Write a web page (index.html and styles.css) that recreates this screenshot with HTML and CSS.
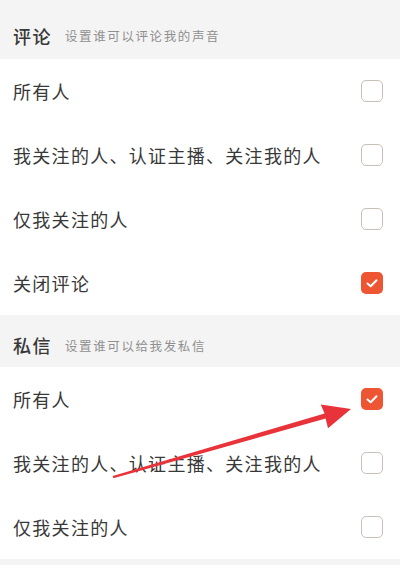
FILE: index.html
```html
<!DOCTYPE html>
<html lang="zh-CN">
<head>
<meta charset="utf-8">
<title>隐私设置</title>
<link rel="stylesheet" href="styles.css">
</head>
<body>
<div class="page">
  <div class="section-head head-first">
    <span class="head-title">评论</span>
    <span class="head-sub">设置谁可以评论我的声音</span>
  </div>
  <div class="row"><span class="label">所有人</span><span class="box"></span></div>
  <div class="row"><span class="label">我关注的人、认证主播、关注我的人</span><span class="box"></span></div>
  <div class="row"><span class="label">仅我关注的人</span><span class="box"></span></div>
  <div class="row"><span class="label">关闭评论</span><span class="box checked"><svg viewBox="0 0 22 22" class="tick"><path d="M6.5 11.5 L9.7 14.3 L15.5 8.3" fill="none" stroke="#fff" stroke-width="2" stroke-linecap="round" stroke-linejoin="round"/></svg></span></div>

  <div class="section-head head-second">
    <span class="head-title">私信</span>
    <span class="head-sub">设置谁可以给我发私信</span>
  </div>
  <div class="row"><span class="label">所有人</span><span class="box checked"><svg viewBox="0 0 22 22" class="tick"><path d="M6.5 11.5 L9.7 14.3 L15.5 8.3" fill="none" stroke="#fff" stroke-width="2" stroke-linecap="round" stroke-linejoin="round"/></svg></span></div>
  <div class="row"><span class="label">我关注的人、认证主播、关注我的人</span><span class="box"></span></div>
  <div class="row"><span class="label">仅我关注的人</span><span class="box"></span></div>
  <div class="bottom-gap"></div>

  <svg class="arrow" viewBox="0 0 400 565" width="400" height="565">
    <polygon fill="#e9333b" points="112.7,476 324.6,413.4 320.7,404.5 351,409 328,428.2 325.6,418.6 113.4,478.2"/>
  </svg>
</div>
</body>
</html>
```
FILE: styles.css
```css
html, body {
  margin: 0;
  padding: 0;
  background: #ffffff;
}
.page {
  position: relative;
  width: 400px;
  height: 565px;
  overflow: hidden;
  font-family: "Noto Sans CJK SC", "Noto Sans", sans-serif;
  background: #f4f4f4;
}
.section-head {
  display: flex;
  align-items: center;
  padding-left: 13px;
  box-sizing: border-box;
  background: #f4f4f4;
}
.head-first {
  height: 59px;
  padding-top: 12px;
}
.head-second {
  height: 52px;
  padding-top: 8px;
}
.head-title {
  font-size: 18px;
  font-weight: 500;
  letter-spacing: 1.5px;
  color: #383838;
}
.head-sub {
  margin-left: 13px;
  font-size: 12.5px;
  letter-spacing: 1.6px;
  color: #8f8f8f;
}
.row {
  display: flex;
  align-items: center;
  justify-content: space-between;
  height: 64px;
  padding: 0 17px 0 13px;
  background: #ffffff;
}
.label {
  font-size: 18px;
  letter-spacing: 1.3px;
  color: #383838;
}
.box {
  width: 22px;
  height: 22px;
  box-sizing: border-box;
  border: 1.8px solid #c9bfb9;
  border-radius: 5px;
  display: flex;
}
.box.checked {
  border: none;
  background: #ee5533;
}
.tick {
  width: 22px;
  height: 22px;
}
.bottom-gap {
  height: 6px;
  background: #f4f4f4;
}
.arrow {
  position: absolute;
  left: 0;
  top: 0;
  pointer-events: none;
}
```
